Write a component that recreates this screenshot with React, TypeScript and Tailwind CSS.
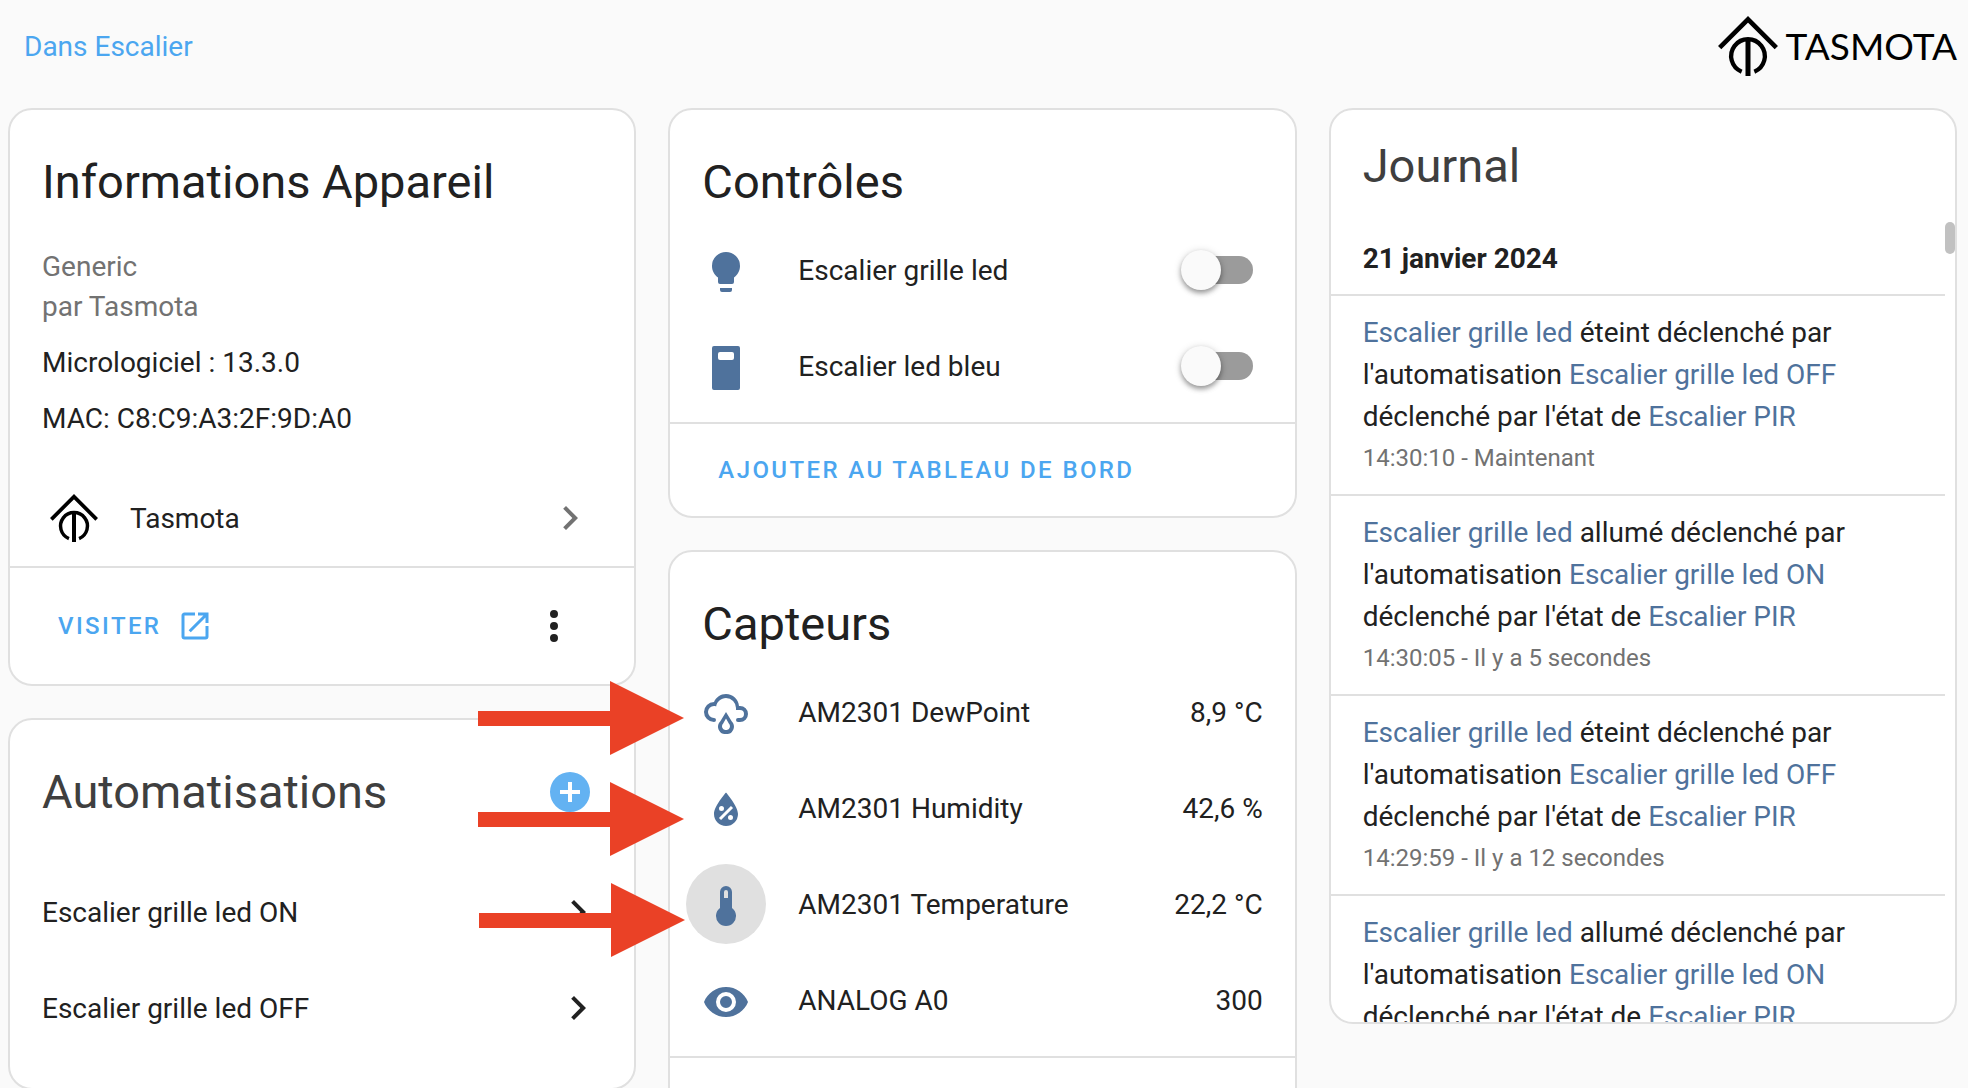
import type { ReactNode } from "react";

const paths = {
  lightbulb:
    "M12,2A7,7 0 0,0 5,9C5,11.38 6.19,13.47 8,14.74V17A1,1 0 0,0 9,18H15A1,1 0 0,0 16,17V14.74C17.81,13.47 19,11.38 19,9A7,7 0 0,0 12,2M9,21A1,1 0 0,0 10,22H14A1,1 0 0,0 15,21V20H9V21Z",
  wallSwitch:
    "M6,1H18A1,1 0 0,1 19,2V22A1,1 0 0,1 18,23H6A1,1 0 0,1 5,22V2A1,1 0 0,1 6,1M9,4A1,1 0 0,0 8,5V7A1,1 0 0,0 9,8H15A1,1 0 0,0 16,7V5A1,1 0 0,0 15,4H9Z",
  rainy:
    "M6,14A1,1 0 0,1 7,15A1,1 0 0,1 6,16A5,5 0 0,1 1,11A5,5 0 0,1 6,6C7,3.65 9.3,2 12,2C15.43,2 18.24,4.66 18.5,8.03L19,8A4,4 0 0,1 23,12A4,4 0 0,1 19,16H18A1,1 0 0,1 17,15A1,1 0 0,1 18,14H19A2,2 0 0,0 21,12A2,2 0 0,0 19,10H17V9A5,5 0 0,0 12,4C9.5,4 7.45,5.82 7.06,8.19C6.73,8.07 6.37,8 6,8A3,3 0 0,0 3,11A3,3 0 0,0 6,14M14.83,15.67C16.39,17.23 16.39,19.5 14.83,21.08C14.05,21.86 13,22 12,22C11,22 9.95,21.86 9.17,21.08C7.61,19.5 7.61,17.23 9.17,15.67L12,11L14.83,15.67M13.41,16.69L12,14.25L10.59,16.69C9.8,17.5 9.8,18.7 10.59,19.5C11,19.93 11.5,20 12,20C12.5,20 13,19.93 13.41,19.5C14.2,18.7 14.2,17.5 13.41,16.69Z",
  waterPercent:
    "M12,3.25C12,3.25 6,10 6,14C6,17.32 8.69,20 12,20A6,6 0 0,0 18,14C18,10 12,3.25 12,3.25M14.47,9.97L15.53,11.03L9.53,17.03L8.47,15.97M9.75,10A1.25,1.25 0 0,1 11,11.25A1.25,1.25 0 0,1 9.75,12.5A1.25,1.25 0 0,1 8.5,11.25A1.25,1.25 0 0,1 9.75,10M14.25,14.5A1.25,1.25 0 0,1 15.5,15.75A1.25,1.25 0 0,1 14.25,17A1.25,1.25 0 0,1 13,15.75A1.25,1.25 0 0,1 14.25,14.5Z",
  thermometer:
    "M15 13V5A3 3 0 0 0 9 5V13A5 5 0 1 0 15 13M12 4A1 1 0 0 1 13 5V8H11V5A1 1 0 0 1 12 4Z",
  eye: "M12,9A3,3 0 0,0 9,12A3,3 0 0,0 12,15A3,3 0 0,0 15,12A3,3 0 0,0 12,9M12,17A5,5 0 0,1 7,12A5,5 0 0,1 12,7A5,5 0 0,1 17,12A5,5 0 0,1 12,17M12,4.5C7,4.5 2.73,7.61 1,12C2.73,16.39 7,19.5 12,19.5C17,19.5 21.27,16.39 23,12C21.27,7.61 17,4.5 12,4.5Z",
  chevronRight:
    "M8.59,16.58L13.17,12L8.59,7.41L10,6L16,12L10,18L8.59,16.58Z",
  openInNew:
    "M14,3V5H17.59L7.76,14.83L9.17,16.24L19,6.41V10H21V3M19,19H5V5H12V3H5C3.89,3 3,3.9 3,5V19A2,2 0 0,0 5,21H19A2,2 0 0,0 21,19V12H19V19Z",
  dotsVertical:
    "M12,16A2,2 0 0,1 14,18A2,2 0 0,1 12,20A2,2 0 0,1 10,18A2,2 0 0,1 12,16M12,10A2,2 0 0,1 14,12A2,2 0 0,1 12,14A2,2 0 0,1 10,12A2,2 0 0,1 12,10M12,4A2,2 0 0,1 14,6A2,2 0 0,1 12,8A2,2 0 0,1 10,6A2,2 0 0,1 12,4Z",
  plusCircle:
    "M17,13H13V17H11V13H7V11H11V7H13V11H17M12,2A10,10 0 0,0 2,12A10,10 0 0,0 12,22A10,10 0 0,0 22,12A10,10 0 0,0 12,2Z",
};

type IconName = keyof typeof paths;

function Icon({ name, className = "size-12" }: { name: IconName; className?: string }) {
  return (
    <svg viewBox="0 0 24 24" className={`shrink-0 fill-current ${className}`} aria-hidden="true">
      <path fillRule="evenodd" d={paths[name]} />
    </svg>
  );
}

function TasmotaMark({ className }: { className: string }) {
  return (
    <svg
      viewBox="0 0 180 180"
      className={`shrink-0 fill-none stroke-black ${className}`}
      aria-hidden="true"
    >
      <path d="M5 95L90 10L175 95" strokeWidth="14" />
      <path d="M71 167A50.5 50.5 0 1 1 109 167" strokeWidth="13" />
      <path d="M90 72V180" strokeWidth="15" />
    </svg>
  );
}

function Card({ children }: { children: ReactNode }) {
  return (
    <section className="overflow-hidden rounded-3xl border-2 border-[#e0e0e0] bg-white">
      {children}
    </section>
  );
}

function CardTitle({ children }: { children: ReactNode }) {
  return <h2 className="px-8 pt-6 text-[47px] leading-24">{children}</h2>;
}

function StateBadge({ icon, active }: { icon: IconName; active?: boolean }) {
  return (
    <span
      className={`flex size-20 shrink-0 items-center justify-center rounded-full pt-1 text-[#4f729c] ${
        active ? "bg-[#e0e0e0]" : ""
      }`}
    >
      <Icon name={icon} />
    </span>
  );
}

function DeviceInfo() {
  return (
    <Card>
      <CardTitle>Informations Appareil</CardTitle>
      <div className="flex flex-col gap-4 px-8 pt-[17px] pb-[31px] leading-10">
        <div className="text-[#727272]">
          <p>Generic</p>
          <p>par Tasmota</p>
        </div>
        <p>Micrologiciel : 13.3.0</p>
        <p>MAC: C8:C9:A3:2F:9D:A0</p>
      </div>
      <a href="#tasmota" className="flex h-24 items-center gap-8 px-10">
        <TasmotaMark className="size-12" />
        <span className="flex-1 pt-0.5">Tasmota</span>
        <Icon name="chevronRight" className="size-12 text-[#727272]" />
      </a>
      <div className="flex items-center justify-between border-t-2 border-[#e0e0e0] py-[10px] pr-8 pl-12">
        <a
          href="#visiter"
          className="flex items-center gap-4 text-2xl font-medium tracking-widest text-[#4ba6f0] uppercase"
        >
          Visiter
          <Icon name="openInNew" className="size-9" />
        </a>
        <button type="button" aria-label="Plus d'options" className="flex size-24 items-center justify-center">
          <Icon name="dotsVertical" />
        </button>
      </div>
    </Card>
  );
}

const automations = ["Escalier grille led ON", "Escalier grille led OFF"];

function Automations() {
  return (
    <Card>
      <div className="flex items-center justify-between pr-10">
        <div className="text-[#3f3f3f]">
          <CardTitle>Automatisations</CardTitle>
        </div>
        <button type="button" aria-label="Ajouter une automatisation" className="pt-6 text-[#63b2f2]">
          <Icon name="plusCircle" />
        </button>
      </div>
      <ul className="pt-6 pb-8">
        {automations.map((name) => (
          <li key={name}>
            <a href="#automatisation" className="flex h-24 items-center justify-between px-8">
              <span className="pt-0.5">{name}</span>
              <Icon name="chevronRight" />
            </a>
          </li>
        ))}
      </ul>
    </Card>
  );
}

const controls: { id: string; icon: IconName; name: string }[] = [
  { id: "grille", icon: "lightbulb", name: "Escalier grille led" },
  { id: "bleu", icon: "wallSwitch", name: "Escalier led bleu" },
];

function AddToDashboard() {
  return (
    <div className="flex h-[94px] items-center border-t-2 border-[#e0e0e0] px-12">
      <button
        type="button"
        className="text-2xl font-medium tracking-widest text-[#4ba6f0] uppercase"
      >
        Ajouter au tableau de bord
      </button>
    </div>
  );
}

function Controls() {
  return (
    <Card>
      <CardTitle>Contrôles</CardTitle>
      <ul className="flex flex-col gap-4 pr-8 pb-4 pl-4">
        {controls.map(({ id, icon, name }) => (
          <li key={id} className="flex items-center">
            <StateBadge icon={icon} />
            <label htmlFor={id} className="flex-1 pt-0.5 pl-8">
              {name}
            </label>
            <input
              id={id}
              type="checkbox"
              role="switch"
              className="relative mr-[10px] h-7 w-16 appearance-none rounded-full bg-[#9b9b9b] before:absolute before:-top-[6px] before:-left-2 before:size-10 before:rounded-full before:bg-[#fafafa] before:shadow-[0_3px_5px_rgba(0,0,0,0.35),0_1px_8px_rgba(0,0,0,0.14)] checked:bg-[#93c9f5] checked:before:left-8 checked:before:bg-[#4ba6f0]"
            />
          </li>
        ))}
      </ul>
      <AddToDashboard />
    </Card>
  );
}

const sensors: { icon: IconName; name: string; value: string; active?: boolean }[] = [
  { icon: "rainy", name: "AM2301 DewPoint", value: "8,9 °C" },
  { icon: "waterPercent", name: "AM2301 Humidity", value: "42,6 %" },
  { icon: "thermometer", name: "AM2301 Temperature", value: "22,2 °C", active: true },
  { icon: "eye", name: "ANALOG A0", value: "300" },
];

function Sensors() {
  return (
    <Card>
      <CardTitle>Capteurs</CardTitle>
      <ul className="flex flex-col gap-4 pr-8 pb-4 pl-4">
        {sensors.map(({ icon, name, value, active }) => (
          <li key={name} className="flex items-center">
            <StateBadge icon={icon} active={active} />
            <span className="flex-1 pt-0.5 pl-8">{name}</span>
            <span className="pt-0.5">{value}</span>
          </li>
        ))}
      </ul>
      <div className="h-24 border-t-2 border-[#e0e0e0]" />
    </Card>
  );
}

const entries = [
  { id: 1, state: "éteint", automation: "Escalier grille led OFF", time: "14:30:10 - Maintenant" },
  { id: 2, state: "allumé", automation: "Escalier grille led ON", time: "14:30:05 - Il y a 5 secondes" },
  { id: 3, state: "éteint", automation: "Escalier grille led OFF", time: "14:29:59 - Il y a 12 secondes" },
  { id: 4, state: "allumé", automation: "Escalier grille led ON" },
];

function EntityLink({ children }: { children: ReactNode }) {
  return (
    <a href="#entite" className="text-[#4f729c]">
      {children}
    </a>
  );
}

function Logbook() {
  return (
    <Card>
      <h2 className="px-8 pt-2 text-[47px] leading-24 text-[#3f3f3f]">Journal</h2>
      <div className="mt-2 flex h-[800px] overflow-hidden">
        <div className="min-w-0 flex-1">
          <h3 className="px-8 pt-[17px] pb-[15px] leading-10 font-bold">21 janvier 2024</h3>
          {entries.map(({ id, state, automation, time }) => (
            <article key={id} className="border-t-2 border-[#e0e0e0] px-8 py-4 leading-[42px]">
              <p>
                <EntityLink>Escalier grille led</EntityLink> {state} déclenché par l'automatisation{" "}
                <EntityLink>{automation}</EntityLink> déclenché par l'état de{" "}
                <EntityLink>Escalier PIR</EntityLink>
              </p>
              {time && <p className="text-2xl leading-10 text-[#727272]">{time}</p>}
            </article>
          ))}
        </div>
        <div className="w-[10px] shrink-0">
          <div className="h-8 rounded-full bg-[#c1c1c1]" />
        </div>
      </div>
    </Card>
  );
}

function Arrow({ className }: { className: string }) {
  return (
    <svg
      viewBox="0 0 206 74"
      className={`pointer-events-none absolute h-[74px] w-[206px] fill-[#ea4126] ${className}`}
      aria-hidden="true"
    >
      <path d="M0 30H132V0L206 37L132 74V45H0Z" />
    </svg>
  );
}

export default function App() {
  return (
    <div className="relative h-screen overflow-hidden bg-[#fafafa] pr-[11px] pl-2 font-[Roboto,sans-serif] text-[28px] leading-10 text-[#212121]">
      <header className="flex h-[108px] items-start justify-between pt-4 pl-4">
        <a href="#escalier" className="pt-px leading-[60px] text-[#4ba6f0]">
          Dans Escalier
        </a>
        <div className="flex items-center gap-2 text-black">
          <TasmotaMark className="size-[60px]" />
          <span className="font-[Lato,sans-serif] text-[37px] leading-[60px]">TASMOTA</span>
        </div>
      </header>
      <main className="grid grid-cols-3 items-start gap-8">
        <div className="flex flex-col gap-8">
          <DeviceInfo />
          <Automations />
        </div>
        <div className="flex flex-col gap-8">
          <Controls />
          <Sensors />
        </div>
        <Logbook />
      </main>
      <Arrow className="top-[681px] left-[478px]" />
      <Arrow className="top-[782px] left-[478px]" />
      <Arrow className="top-[883px] left-[479px]" />
    </div>
  );
}
